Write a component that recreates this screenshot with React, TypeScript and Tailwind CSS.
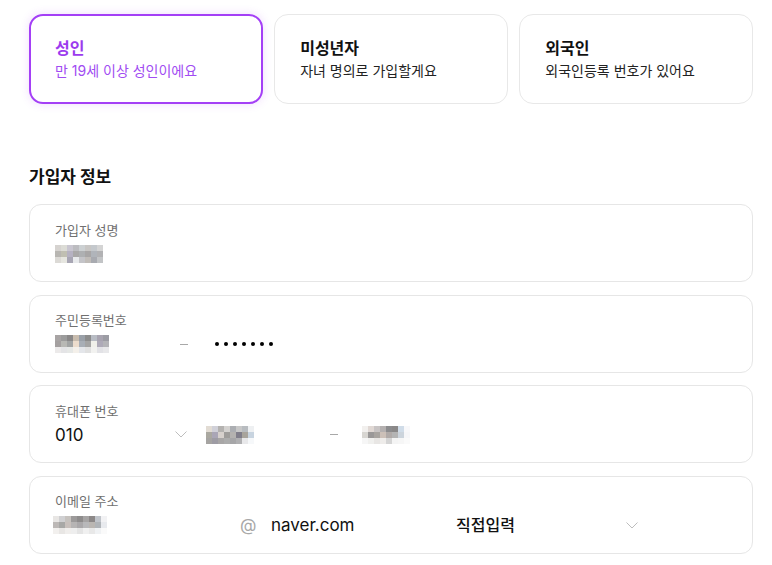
import React from "react";

const FONT = { fontFamily: '"Inter", "Noto Sans CJK KR", sans-serif' };

function Mosaic({ rows, cell = 6 }: { rows: string[][]; cell?: number }) {
  const w = rows[0].length * cell;
  const h = rows.length * cell;
  return (
    <svg width={w} height={h} viewBox={`0 0 ${w} ${h}`} className="block shrink-0">
      {rows.map((r, y) =>
        r.map((c, x) => <rect key={`${x}-${y}`} x={x * cell} y={y * cell} width={cell} height={cell} fill={c} />)
      )}
    </svg>
  );
}

function Chevron() {
  return (
    <svg width="12" height="7" viewBox="0 0 12 7" className="block shrink-0">
      <polyline points="0.5,0.5 6,6 11.5,0.5" fill="none" stroke="#bdbdbd" strokeWidth="1" />
    </svg>
  );
}

const nameRows = [
  ["#d6d3d0", "#dcdcd6", "#c9c6d0", "#bcbcc0", "#ccd0d2", "#c8c6c4", "#c4c8cc", "#d4d4d4"],
  ["#b8b6b2", "#c0bfb2", "#b6b2c2", "#a9a8a8", "#aeb0b2", "#a8a6a6", "#b0b4ba", "#b2b2b4"],
  ["#dcdad6", "#e6e6e0", "#a8a6b4", "#e8eaec", "#c4c4c8", "#c0bcb8", "#a8aab0", "#c2c4c6"],
];
const rrnRows = [
  ["#a8a4a4", "#9c9c9c", "#8a8888", "#c8bcae", "#9aa0a8", "#8c8c8c", "#b8bcc4", "#a8a4b0", "#9c9ca4"],
  ["#a4a0a0", "#b8b8b4", "#a2a4a4", "#ecdccc", "#a8aeb6", "#a4a4a4", "#f0f0ea", "#aeaab8", "#b4b4b8"],
  ["#eceaea", "#e4e4e6", "#e6e8e6", "#f4f0ea", "#e4e6ea", "#e0e0e0", "#f2f2f0", "#e2e2e6", "#e8e8ea"],
];
const phone1Rows = [
  ["#e2dcd4", "#d0d0d8", "#b4b2b0", "#d4d2d0", "#acaeb2", "#c8c8c8", "#b8bcc0", "#eef0f2"],
  ["#aaa8a0", "#aaa6b6", "#d6d0cc", "#9e9c9a", "#b4b2b0", "#807e8a", "#a8a49c", "#c8d4e0"],
  ["#a6a4a2", "#9e9ca4", "#a8a6a6", "#acacac", "#a6a6a8", "#b0b0b2", "#e8e8ea", "#f6f8fa"],
];
const phone2Rows = [
  ["#f2f0ee", "#e0d8d4", "#c8c4c4", "#b4b0b0", "#8c8c8e", "#8a8888", "#d0dce8", "#f8f8fa"],
  ["#d8d6d2", "#9a9898", "#a8a4a0", "#ccc0b8", "#b0aaa8", "#b4b4b4", "#ccd4dc", "#f6f6f8"],
  ["#f6f6f6", "#f0f0ee", "#e8e6e4", "#eeecea", "#d4d4d4", "#f4f4f4", "#f6f6f6", "#fafafa"],
];
const emailRows = [
  ["#e8e6e4", "#d0d0d2", "#c6c2be", "#9c9a9a", "#8e8c8c", "#a6a4a4", "#8c8888", "#c0c4ca", "#f2f2f4"],
  ["#bcb8b6", "#a8a8a6", "#c8c0bc", "#b6b4b4", "#aaa8aa", "#b8b8ba", "#bab6b2", "#b0b4b8", "#e8eaee"],
  ["#f2f0ee", "#e8e6e4", "#f0eeec", "#eeeeee", "#e4e4e4", "#f0f0f0", "#e8e8e8", "#f0f2f4", "#fafafa"],
];

function Dash() {
  return <div className="w-[8px] h-px bg-[#a8a8a8] shrink-0" />;
}

function Field({ label, children }: { label: string; children: React.ReactNode }) {
  return (
    <div className="h-[78px] rounded-[12px] border border-[#e6e6e6] bg-white pl-[25px] flex flex-col justify-center">
      <div className="text-[13px] leading-[18px] text-[#707070]">{label}</div>
      <div className="h-[24px] mt-[3px] flex items-center">{children}</div>
    </div>
  );
}

export default function App() {
  return (
    <div className="w-[772px] h-[565px] bg-white pl-[29px] pr-[19px] pt-[14px] overflow-hidden" style={FONT}>
      <div className="grid grid-cols-3 gap-[11.5px]">
        <div className="h-[90px] rounded-[14px] border-2 border-[#a43ff6] shadow-[0_0_10px_rgba(164,63,246,0.18)] pl-[24px] flex flex-col justify-center">
          <div className="text-[16px] leading-[22px] font-bold text-[#9c3bee]">성인</div>
          <div className="text-[14px] leading-[20px] mt-[2px] text-[#a14cf2]">만 19세 이상 성인이에요</div>
        </div>
        <div className="h-[90px] rounded-[14px] border border-[#e8e8e8] pl-[25px] flex flex-col justify-center">
          <div className="text-[16px] leading-[22px] font-bold text-[#111111]">미성년자</div>
          <div className="text-[14px] leading-[20px] mt-[2px] text-[#222222]">자녀 명의로 가입할게요</div>
        </div>
        <div className="h-[90px] rounded-[14px] border border-[#e8e8e8] pl-[25px] flex flex-col justify-center">
          <div className="text-[16px] leading-[22px] font-bold text-[#111111]">외국인</div>
          <div className="text-[14px] leading-[20px] mt-[2px] text-[#222222]">외국인등록 번호가 있어요</div>
        </div>
      </div>

      <div className="mt-[61px] text-[17px] leading-[24px] font-bold text-[#111111]">가입자 정보</div>

      <div className="mt-[15px] flex flex-col gap-[12.6px]">
        <Field label="가입자 성명">
          <Mosaic rows={nameRows} />
        </Field>
        <Field label="주민등록번호">
          <Mosaic rows={rrnRows} />
          <div className="ml-[71px]">
            <Dash />
          </div>
          <div className="ml-[27px] flex gap-[5px]">
            <span className="w-[4px] h-[4px] rounded-full bg-black" />
            <span className="w-[4px] h-[4px] rounded-full bg-black" />
            <span className="w-[4px] h-[4px] rounded-full bg-black" />
            <span className="w-[4px] h-[4px] rounded-full bg-black" />
            <span className="w-[4px] h-[4px] rounded-full bg-black" />
            <span className="w-[4px] h-[4px] rounded-full bg-black" />
            <span className="w-[4px] h-[4px] rounded-full bg-black" />
          </div>
        </Field>
        <Field label="휴대폰 번호">
          <span className="w-[120px] text-[17px] leading-[24px] text-[#111111]">010</span>
          <Chevron />
          <div className="ml-[19px]">
            <Mosaic rows={phone1Rows} />
          </div>
          <div className="ml-[76px]">
            <Dash />
          </div>
          <div className="ml-[24px]">
            <Mosaic rows={phone2Rows} />
          </div>
        </Field>
        <Field label="이메일 주소">
          <div className="-ml-[2px]">
            <Mosaic rows={emailRows} />
          </div>
          <span className="ml-[133px] w-[31px] text-[17px] leading-[24px] text-[#a8a8a8]">@</span>
          <span className="w-[185px] text-[17px] leading-[24px] text-[#111111]">naver.com</span>
          <span className="w-[170px] text-[16px] leading-[24px] font-medium text-[#111111]">직접입력</span>
          <Chevron />
        </Field>
      </div>
    </div>
  );
}
